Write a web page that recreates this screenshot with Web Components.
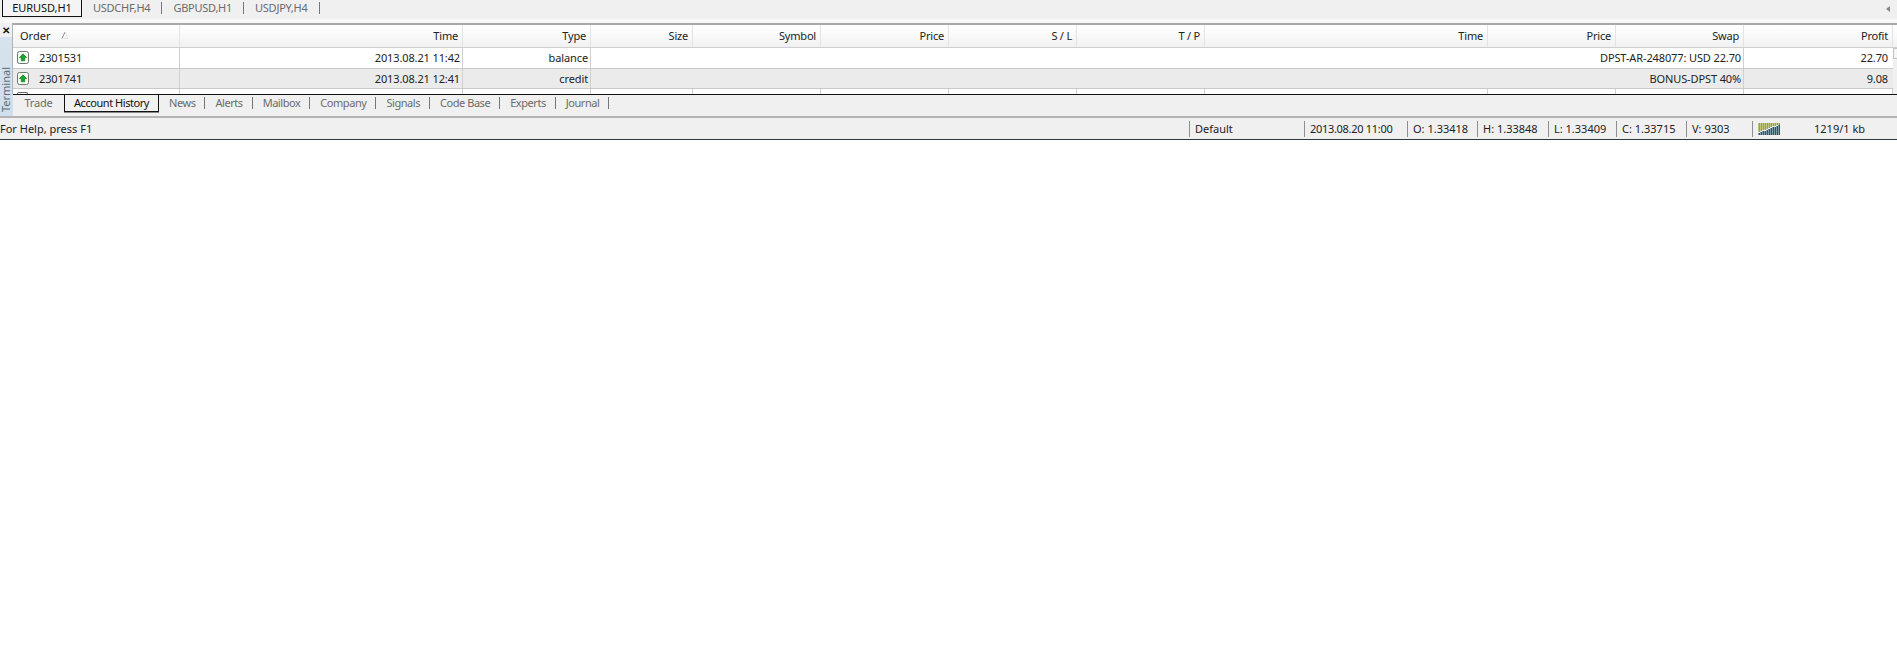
<!DOCTYPE html>
<html><head><meta charset="utf-8"><style>
html,body{margin:0;padding:0;background:#fff;height:100%}
body{font:11px "Noto Sans",sans-serif;color:#222;overflow:hidden}
</style></head><body>
<mt-app></mt-app>
<script>
function el(name,css,html){customElements.define(name,class extends HTMLElement{constructor(){super();const s=this.attachShadow({mode:'open'});s.innerHTML='<style>'+css+'</style>'+html;}});}
const COLS=[167,283,128,102,128,128,128,128,283,128,128,149];
const GRID=COLS.map(c=>c+'px').join(' ');
const FONT='font:11px "Noto Sans",sans-serif;';
const ARROW='<svg width="12" height="13" viewBox="0 0 12 13" style="display:block;flex:none"><rect x=".5" y=".5" width="11" height="12" rx="2" fill="#f6fbf6" stroke="#6a7a6e"/><path d="M6 2.8 9.6 6.6H7.7V9.8H4.3V6.6H2.4Z" fill="#12a822" stroke="#0a6c14" stroke-width=".6"/></svg>';

el('mt-top-tab',`:host{display:flex;align-items:center;height:17px;padding:0 0 2px 11px;box-sizing:border-box;color:#6b6b6b;letter-spacing:-.25px}
:host([active]){height:17px;border:1px solid #111;border-top:0;background:#f4f4f4;color:#111;width:80px;padding:0 0 2px;justify-content:center;margin-left:2px;letter-spacing:-.05px}
.s{width:1px;height:12px;background:#777;margin-left:11px}
:host([active]) .s{display:none}`,`<slot></slot><span class="s"></span>`);

el('mt-chart-tabs',`:host{display:flex;align-items:flex-start;height:19px;background:#f0f0f0;${FONT}}
.a{margin-left:auto;margin-right:7px;margin-top:6px;width:0;height:0;border:3px solid transparent;border-left:0;border-right:4px solid #888}`,
`<slot></slot><span class="a"></span>`);

el('mt-hcell',`:host{display:flex;align-items:center;justify-content:flex-end;padding:0 4px 2px 0;box-sizing:border-box;border-right:1px solid #e4e4e4;height:100%;overflow:hidden;white-space:nowrap;color:#222;letter-spacing:-.2px}
:host([left]){justify-content:flex-start;padding-left:7px;padding-right:0;letter-spacing:0}`,`<slot></slot>`);

el('mt-cell',`:host{display:flex;align-items:center;justify-content:flex-end;box-sizing:border-box;border-right:1px solid #d0d0d0;padding:0 2px 1px 0;white-space:nowrap;overflow:hidden;color:#222;letter-spacing:-.12px}
:host([first]){justify-content:flex-start;padding:0 0 1px 4px;gap:10px}
:host([plain]){border-right:0;padding-right:5px}`,`<slot></slot>`);

el('mt-header',`:host{display:grid;grid-template-columns:${GRID};height:23px;box-sizing:border-box;background:linear-gradient(#fff 0,#fbfbfb 35%,#f1f1f1 100%);border-bottom:1px solid #cfcfcf;${FONT}}`,`<slot></slot>`);

el('mt-row',`:host{display:grid;grid-template-columns:${GRID};height:20px;box-sizing:border-box;margin-right:4px;border-bottom:1px solid #c9c9c9;background:#fff;${FONT}}
:host([alt]){background:#ebebeb}
:host([tall]){height:21px}`,`<slot></slot>`);

el('mt-terminal',`:host{display:grid;grid-template-columns:13px 1fr;height:93px;background:#f0f0f0;${FONT}}
.side{background:linear-gradient(#f0f0f0 0 14px,#d6e3ee 14px,#cfdfec);display:flex;flex-direction:column;justify-content:space-between;align-items:center}
.x{font:bold 10px "Liberation Sans",sans-serif;color:#111;line-height:10px;margin:3px 2px 0 0}
.v{writing-mode:vertical-rl;transform:rotate(180deg);color:#5d6b76;margin-bottom:4px;line-height:12px;margin-right:1px}
.main{display:flex;flex-direction:column;min-width:0}
.grid{border-top:2px solid #a8a8a8;border-left:1px solid #b4b4b4;margin-left:-1px;background:#f0f0f0;overflow:hidden;height:71px;box-sizing:border-box;position:relative}
.thumb{position:absolute;right:0;top:23px;width:3px;height:9px;border:1px solid #c4c4c4;border-right:0;background:#f6f6f6}
`,`<div class="side"><span class="x">✕</span><span class="v">Terminal</span></div><div class="main"><div class="grid"><slot></slot><span class="thumb"></span></div><slot name="tabs"></slot></div>`);

el('mt-bottom-tab',`:host{display:flex;align-items:center;color:#6b6b6b;height:16px;padding:0 9px 1px 10px;box-sizing:border-box;letter-spacing:-.45px}
:host([plain]){padding:0 0 1px;width:51px;justify-content:center;letter-spacing:-.2px}
:host([active]){color:#111;border:1px solid #111;border-top:0;width:95px;padding:0 0 1px;justify-content:center;height:17px;background:#f1f1f1;box-shadow:0 1px 0 #888}`,`<slot></slot>`);
el('mt-sep',`:host{display:block;width:1px;height:12px;background:#777;margin-top:2px}`,``);

el('mt-bottom-tabs',`:host{display:flex;height:22px;box-sizing:border-box;align-items:flex-start;${FONT}background:#f0f0f0;border-top:1px solid #111}`,`<slot></slot>`);

el('mt-status-cell',`:host{display:flex;align-items:center;box-sizing:border-box;padding:0 0 0 5px;height:16px;border-left:1px solid #8f8f8f;white-space:nowrap;color:#222}
:host([flush]){border-left:0;padding-left:0}
:host([tight]){letter-spacing:-.3px}
:host([grow]){flex:1;gap:33px}`,`<slot></slot>`);

el('mt-status',`:host{display:flex;align-items:center;height:24px;box-sizing:border-box;background:#f0f0f0;border-top:2px solid #b4b4b4;border-bottom:1px solid #2f3740;${FONT}}`,`<slot></slot>`);

customElements.define('mt-app',class extends HTMLElement{constructor(){super();const s=this.attachShadow({mode:'open'});
const hdr=['Order','Time','Type','Size','Symbol','Price','S / L','T / P','Time','Price','Swap','Profit'];
const st=(w,t,a='')=>`<mt-status-cell ${a} style="width:${w}px">${t}</mt-status-cell>`;
const bars=(()=>{let r='';for(let i=0;i<11;i++){const h=2+Math.round(i*0.8);const x=i*2+.5;r+=`<rect x="${x}" y="0" width="1.4" height="${Math.max(2,11-h)}" fill="#8c9f14"/><rect x="${x}" y="${12-h}" width="1.4" height="${h}" fill="#0e4a5c"/>`}return `<svg width="23" height="12" viewBox="0 0 23 12" style="display:block;flex:none">${r}</svg>`})();
const sort='<svg width="8" height="8" viewBox="0 0 8 8" style="margin-left:11px;flex:none"><path d="M1 7.5 4 1" stroke="#8a8a8a" fill="none"/><path d="M4 1 7 7.5H1" stroke="#e2e2e2" fill="none"/></svg>';
s.innerHTML=`<style>:host{display:block;width:1897px}
.gap{height:4px;background:#f8f8f8}
.stub{display:grid;grid-template-columns:${GRID};height:5px;margin-right:4px;background:#fff}
.stub i{border-right:1px solid #d0d0d0;display:block;position:relative}
.stub i.f::before{content:"";position:absolute;left:4px;top:3px;width:11px;height:2px;border:1px solid #666;border-radius:2px 2px 0 0;box-sizing:border-box;border-bottom:0}
</style>
<mt-chart-tabs>
<mt-top-tab active>EURUSD,H1</mt-top-tab>
<mt-top-tab>USDCHF,H4</mt-top-tab><mt-top-tab>GBPUSD,H1</mt-top-tab><mt-top-tab>USDJPY,H4</mt-top-tab>
</mt-chart-tabs>
<div class="gap"></div>
<mt-terminal>
<mt-header>${hdr.map((h,i)=>`<mt-hcell ${i==0?'left':''}>${h}${i==0?sort:''}</mt-hcell>`).join('')}</mt-header>
<mt-row tall><mt-cell first>${ARROW}2301531</mt-cell><mt-cell>2013.08.21 11:42</mt-cell><mt-cell>balance</mt-cell><mt-cell style="grid-column:span 8">DPST-AR-248077: USD 22.70</mt-cell><mt-cell plain>22.70</mt-cell></mt-row>
<mt-row alt><mt-cell first>${ARROW}2301741</mt-cell><mt-cell>2013.08.21 12:41</mt-cell><mt-cell>credit</mt-cell><mt-cell style="grid-column:span 8">BONUS-DPST 40%</mt-cell><mt-cell plain>9.08</mt-cell></mt-row>
<div class="stub">${COLS.map((_,i)=>`<i class="${i?'':'f'}"></i>`).join('')}</div>
<mt-bottom-tabs slot="tabs">
<mt-bottom-tab plain>Trade</mt-bottom-tab><mt-bottom-tab active>Account History</mt-bottom-tab>
<mt-bottom-tab>News</mt-bottom-tab><mt-sep></mt-sep>
<mt-bottom-tab>Alerts</mt-bottom-tab><mt-sep></mt-sep>
<mt-bottom-tab>Mailbox</mt-bottom-tab><mt-sep></mt-sep>
<mt-bottom-tab>Company</mt-bottom-tab><mt-sep></mt-sep>
<mt-bottom-tab>Signals</mt-bottom-tab><mt-sep></mt-sep>
<mt-bottom-tab>Code Base</mt-bottom-tab><mt-sep></mt-sep>
<mt-bottom-tab>Experts</mt-bottom-tab><mt-sep></mt-sep>
<mt-bottom-tab>Journal</mt-bottom-tab><mt-sep></mt-sep>
</mt-bottom-tabs>
</mt-terminal>
<mt-status>
${st(1189,'For Help, press F1','flush')}
${st(115,'Default')}${st(103,'2013.08.20 11:00','tight')}${st(70,'O: 1.33418')}${st(71,'H: 1.33848')}${st(68,'L: 1.33409')}${st(70,'C: 1.33715')}${st(66,'V: 9303')}
<mt-status-cell grow>${bars}<span>1219/1 kb</span></mt-status-cell>
</mt-status>`;
}});
</script>
</body></html>
